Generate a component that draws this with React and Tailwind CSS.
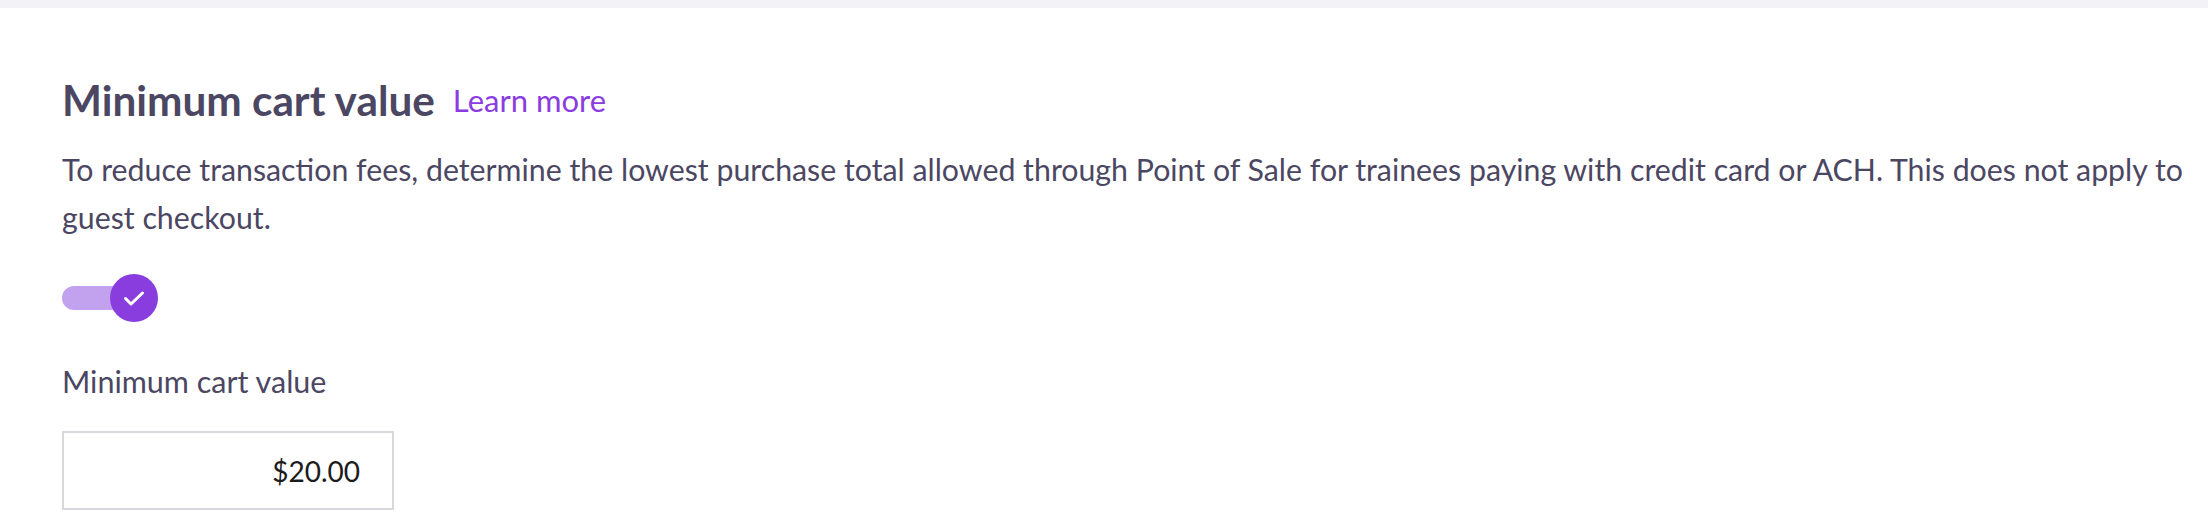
import React, { useState } from 'react';

// Settings section: minimum cart value for Point of Sale
function CheckToggle({ checked, onChange }) {
    return (
        <button
            type="button"
            onClick={() => onChange(!checked)}
            className="flex items-center h-[48px] w-[96px]"
            aria-pressed={checked}
        >
            <span className="block h-[24px] w-[76px] rounded-full bg-[#c2a1ee]" />
            <span className="-ml-[28px] flex h-[48px] w-[48px] shrink-0 items-center justify-center rounded-full bg-[#8a3ddf]">
                {checked && (
                    <svg width="22" height="15" viewBox="0 0 22 15" fill="none">
                        <polyline points="2.5,7.5 8,13 19.5,2" stroke="#ffffff" strokeWidth="3" strokeLinecap="round" strokeLinejoin="round" />
                    </svg>
                )}
            </span>
        </button>
    );
}

export default function App() {
    const [enabled, setEnabled] = useState(true);
    const [amount, setAmount] = useState('$20.00');

    return (
        <div className="min-h-screen bg-white font-['Lato','Noto_Sans',sans-serif] text-[#4b4762]">
            <div className="h-[8px] bg-[#f2f2f7]" />

            <div className="pl-[62px] pr-[24px] pt-[66px]">
                {/* Heading */}
                <div className="flex h-[52px] items-center gap-[18px]">
                    <h2 className="text-[42.3px] font-bold leading-[52px] text-[#4b4762]">Minimum cart value</h2>
                    <a href="#" className="text-[31px] leading-[40px] text-[#8a3ce0]">Learn more</a>
                </div>

                <p className="mt-[19px] text-[30.3px] leading-[48px]">
                    To reduce transaction fees, determine the lowest purchase total allowed through Point of Sale for trainees paying with credit card or ACH. This does not apply to guest checkout.
                </p>

                <div className="mt-[33px]">
                    <CheckToggle checked={enabled} onChange={setEnabled} />
                </div>

                <label className="mt-[35px] block text-[30.5px] leading-[48px]">Minimum cart value</label>

                <input
                    value={amount}
                    onChange={(e) => setAmount(e.target.value)}
                    className="mt-[26px] block h-[79px] w-[332px] border-2 border-[#d8d8de] bg-white pr-[32px] text-right text-[28px] text-[#1c1c1c] outline-none"
                />
            </div>
        </div>
    );
}
